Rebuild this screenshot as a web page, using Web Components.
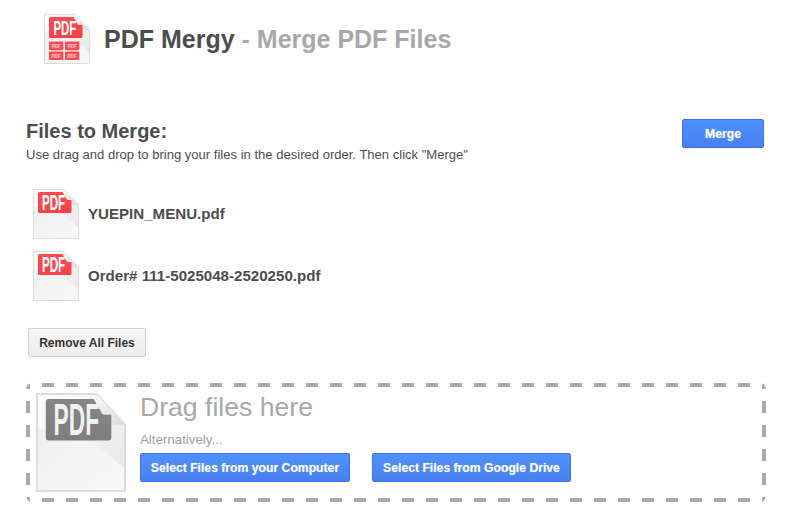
<!DOCTYPE html>
<html lang="en">
<head>
<meta charset="utf-8">
<title>PDF Mergy</title>
<style>
	html, body {
		margin: 0;
		background: #fff;
		font-family: "Liberation Sans", Arial, sans-serif;
		color: #4d4d4d;
	}
</style>
</head>
<body>
<pdf-app></pdf-app>
<script>
(function() {
	let gradientCount = 0;

	class PdfIcon extends HTMLElement {
		connectedCallback() {
			const variant = this.getAttribute('variant') || 'file';
			const id = 'i' + (gradientCount++);
			const badge = variant === 'drop' ? `url(#${id}g)` : `url(#${id}r)`;
			const tile = (x, y) => `
				<rect x="${x}" y="${y}" width="14.4" height="8.6" rx="0.8" fill="#fb4a50"/>
				<text transform="translate(${x + 2.4} ${y + 6.6}) scale(1 1.3)" font-size="4.8" font-weight="bold" fill="#ffd9da">PDF</text>`;
			const tiles = variant === 'logo' ? tile(5, 27.6) + tile(21, 27.6) + tile(5, 37.4) + tile(21, 37.4) : '';
			const label = variant === 'logo'
				? `<text transform="translate(9.4 21) scale(1 1.75)" font-size="11.4" font-weight="bold" fill="#fff">PDF</text>`
				: `<text transform="translate(9 21.4) scale(1 1.95)" font-size="11.6" font-weight="bold" fill="${variant === 'drop' ? '#f2f2f2' : '#fff'}">PDF</text>`;
			const shadow = this.attachShadow({mode: 'open'});
			shadow.innerHTML = `<style>
					:host { display: block; flex: none; width: 46px; height: 50px; }
					:host([variant="drop"]) { width: 90px; height: 99px; }
					svg { display: block; width: 100%; height: 100%; font-family: "Liberation Sans", Arial, sans-serif; }
				</style>
				<svg viewBox="0 0 46 50" preserveAspectRatio="none">
					<defs>
						<linearGradient id="${id}p" x1="0" y1="0" x2="1" y2="1">
							<stop offset="0" stop-color="#fefefe"/>
							<stop offset="1" stop-color="#e6e6e6"/>
						</linearGradient>
						<linearGradient id="${id}s" x1="0" y1="0" x2="1" y2="1">
							<stop offset="0" stop-color="#f0f0f0"/>
							<stop offset="1" stop-color="#f8f8f8"/>
						</linearGradient>
						<linearGradient id="${id}f" x1="0" y1="0" x2="1" y2="1">
							<stop offset="0" stop-color="#f6f6f6"/>
							<stop offset="1" stop-color="#dcdcdc"/>
						</linearGradient>
						<linearGradient id="${id}r" x1="0" y1="0" x2="0" y2="1">
							<stop offset="0" stop-color="#ff4a50"/>
							<stop offset="1" stop-color="#f2434a"/>
						</linearGradient>
						<linearGradient id="${id}g" x1="0" y1="0" x2="0" y2="1">
							<stop offset="0" stop-color="#868686"/>
							<stop offset="1" stop-color="#7e7e7e"/>
						</linearGradient>
					</defs>
					<path d="M.5 .5H31L45.5 16V49.5H.5Z" fill="url(#${id}p)" stroke="#dcdcdc"/>
					<path d="M1 18Q25 18 45 38V49H1Z" fill="url(#${id}s)"/>
					<path d="M31 .5L45.5 16H33Q31 16 31 14Z" fill="url(#${id}f)"/>
					<path d="M6.5 3H29.5L33.5 10Q34 11 35 11H38.5V22.5Q38.5 24 37 24H6.5Q5 24 5 22.5V4.5Q5 3 6.5 3Z" fill="${badge}"/>
					${label}
					${tiles}
				</svg>`;
		}
	}

	class PdfButton extends HTMLElement {
		constructor() {
			super();
			const shadow = this.attachShadow({mode: 'open'});
			shadow.innerHTML = `<style>
					:host {
						display: inline-flex;
						align-items: center;
						justify-content: center;
						box-sizing: border-box;
						height: 29px;
						flex: none;
						border: 1px solid #3b72f0;
						border-radius: 2px;
						background: linear-gradient(#5091ff, #4780ee);
						color: #fff;
						font: bold 12.2px "Liberation Sans", Arial, sans-serif;
						text-shadow: 0 0 1px rgba(255, 255, 255, 0.5);
					}
					:host([plain]) {
						border-color: #d0d0d0;
						background: linear-gradient(#f6f6f6, #eeeeee);
						color: #333;
						font-size: 12px;
						text-shadow: none;
					}
				</style><slot></slot>`;
		}
	}

	class PageHeader extends HTMLElement {
		constructor() {
			super();
			const shadow = this.attachShadow({mode: 'open'});
			shadow.innerHTML = `<style>
					:host { display: flex; align-items: center; gap: 14px; margin-left: 44px; padding-top: 14px; }
					h1 { margin: 0; font: bold 25px/30px "Liberation Sans", Arial, sans-serif; color: #4d4d4d; }
					span { color: #a8a8a8; }
				</style>
				<pdf-icon variant="logo"></pdf-icon>
				<h1>PDF Mergy <span>- Merge PDF Files</span></h1>`;
		}
	}

	class MergeHead extends HTMLElement {
		constructor() {
			super();
			const shadow = this.attachShadow({mode: 'open'});
			shadow.innerHTML = `<style>
					:host { display: flex; justify-content: space-between; align-items: flex-start; margin: 55px 30px 0 26px; }
					h2 { margin: 0; font: bold 20px/24px "Liberation Sans", Arial, sans-serif; color: #4d4d4d; }
					p { margin: 4px 0 0; font: 13.06px/16px "Liberation Sans", Arial, sans-serif; color: #4d4d4d; }
					pdf-button { width: 82px; }
				</style>
				<div>
					<h2>Files to Merge:</h2>
					<p>Use drag and drop to bring your files in the desired order. Then click "Merge"</p>
				</div>
				<pdf-button>Merge</pdf-button>`;
		}
	}

	class FileRow extends HTMLElement {
		constructor() {
			super();
			const shadow = this.attachShadow({mode: 'open'});
			shadow.innerHTML = `<style>
					:host { display: flex; align-items: center; gap: 9px; height: 50px; }
					span { font: bold 15.1px/18px "Liberation Sans", Arial, sans-serif; color: #4d4d4d; }
				</style>
				<pdf-icon></pdf-icon>
				<span><slot></slot></span>`;
		}
	}

	class FileList extends HTMLElement {
		constructor() {
			super();
			const shadow = this.attachShadow({mode: 'open'});
			shadow.innerHTML = `<style>
					:host { display: flex; flex-direction: column; gap: 12px; margin: 26px 0 0 33px; }
				</style><slot></slot>`;
		}
	}

	class DropZone extends HTMLElement {
		constructor() {
			super();
			const shadow = this.attachShadow({mode: 'open'});
			shadow.innerHTML = `<style>
					:host {
						display: flex;
						gap: 14px;
						box-sizing: border-box;
						width: 740px;
						height: 119px;
						margin: 26px 0 0 26px;
						padding: 10px;
						border-radius: 6px;
						--dash-x: linear-gradient(90deg, #aaa 50%, transparent 50%);
						--dash-y: linear-gradient(#aaa 50%, transparent 50%);
						background:
							var(--dash-x) 16px 0 / 24px 4px repeat-x,
							var(--dash-x) 16px 100% / 24px 4px repeat-x,
							var(--dash-y) 0 -6px / 4px 24px repeat-y,
							var(--dash-y) 100% -6px / 4px 24px repeat-y;
					}
					.copy { display: flex; flex-direction: column; }
					.title { font: 26.6px/28px "Liberation Sans", Arial, sans-serif; color: #a8a8a8; }
					.alt { margin-top: 11px; font: 13.3px/16px "Liberation Sans", Arial, sans-serif; color: #a0a0a0; }
					.actions { display: flex; gap: 22px; margin-top: 5px; }
					.computer { width: 210px; }
					.drive { width: 199px; }
				</style>
				<pdf-icon variant="drop"></pdf-icon>
				<div class="copy">
					<div class="title">Drag files here</div>
					<div class="alt">Alternatively...</div>
					<div class="actions">
						<pdf-button class="computer">Select Files from your Computer</pdf-button>
						<pdf-button class="drive">Select Files from Google Drive</pdf-button>
					</div>
				</div>`;
		}
	}

	class PdfApp extends HTMLElement {
		constructor() {
			super();
			const shadow = this.attachShadow({mode: 'open'});
			shadow.innerHTML = `<style>
					:host { display: block; }
					.remove { margin: 27px 0 0 28px; width: 118px; }
				</style>
				<page-header></page-header>
				<merge-head></merge-head>
				<file-list>
					<file-row>YUEPIN_MENU.pdf</file-row>
					<file-row>Order# 111-5025048-2520250.pdf</file-row>
				</file-list>
				<pdf-button class="remove" plain>Remove All Files</pdf-button>
				<drop-zone></drop-zone>`;
		}
	}

	function defineElements() {
		customElements.define('pdf-icon', PdfIcon);
		customElements.define('pdf-button', PdfButton);
		customElements.define('page-header', PageHeader);
		customElements.define('merge-head', MergeHead);
		customElements.define('file-row', FileRow);
		customElements.define('file-list', FileList);
		customElements.define('drop-zone', DropZone);
		customElements.define('pdf-app', PdfApp);
	}

	defineElements();
})();
</script>
</body>
</html>
